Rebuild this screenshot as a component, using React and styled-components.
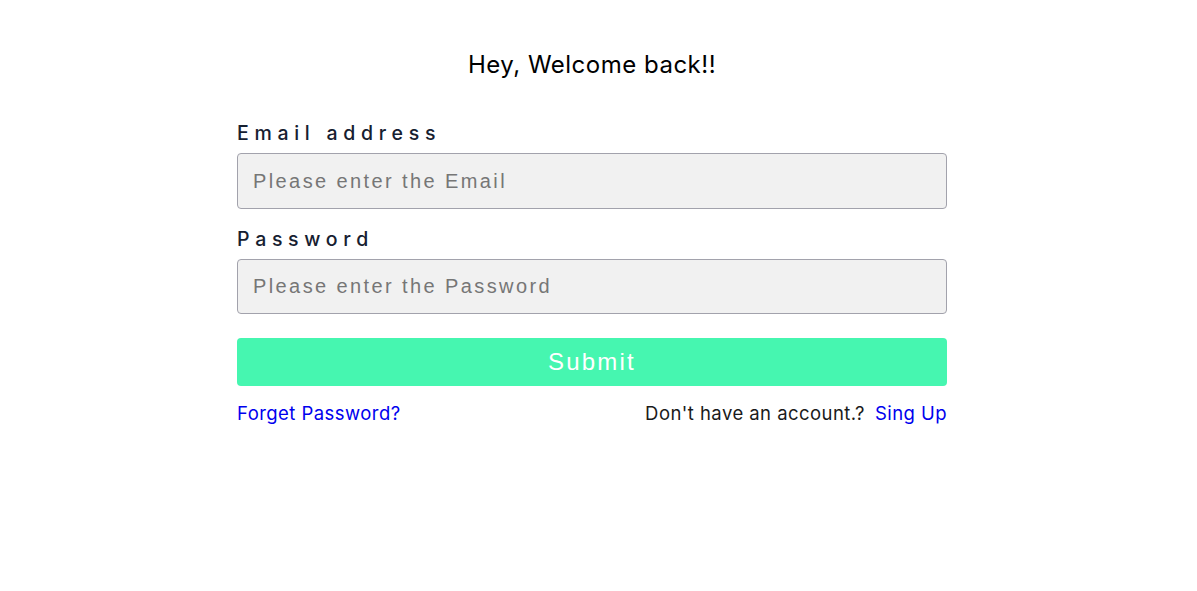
import React from 'react'
import styled, { createGlobalStyle } from 'styled-components'

const GlobalStyle = createGlobalStyle`
  body {
    margin: 0;
    background: #ffffff;
    font-family: "Inter", "Liberation Sans", sans-serif;
  }
`

const Page = styled.div`
  display: flex;
  flex-direction: column;
  align-items: center;
  padding: 50px 13px 0 0;
`

const Title = styled.h2`
  margin: 0 0 42px;
  font-size: 24px;
  font-weight: 400;
  letter-spacing: 0.5px;
  color: #000;
`

const Form = styled.form`
  width: 710px;
  display: flex;
  flex-direction: column;
`

const Label = styled.label`
  font-size: 19.5px;
  font-weight: 500;
  letter-spacing: 5.7px;
  color: #162030;
  margin-bottom: 8px;
`

const Input = styled.input`
  box-sizing: border-box;
  height: ${p => p.$h}px;
  width: 100%;
  padding: 0 15px;
  margin-bottom: ${p => p.$mb}px;
  border: 1px solid #a2a2ac;
  border-radius: 4px;
  background: #f1f1f1;
  font-family: "Liberation Sans", Arial, sans-serif;
  font-size: 20px;
  letter-spacing: 2.4px;
  color: #333;
  outline: none;

  &::placeholder {
    color: #767676;
  }
`

const SubmitButton = styled.button`
  height: 48px;
  width: 100%;
  border: none;
  border-radius: 4px;
  background: #46f6b0;
  color: #ffffff;
  font-family: "Liberation Sans", Arial, sans-serif;
  font-size: 24px;
  letter-spacing: 2.2px;
  cursor: pointer;
`

const Footer = styled.div`
  display: flex;
  justify-content: space-between;
  align-items: center;
  margin-top: 16px;
  font-size: 18.5px;
  letter-spacing: 0.45px;
`

const Link = styled.a`
  color: #0000ee;
  text-decoration: none;
  cursor: pointer;
`

const Muted = styled.span`
  color: #1a1a1a;
  margin-right: 10px;
`

export default function App() {
  return (
    <>
      <GlobalStyle />
      <Page>
        <Title>Hey, Welcome back!!</Title>
        <Form onSubmit={e => e.preventDefault()}>
          <Label htmlFor="email">Email address</Label>
          <Input id="email" type="email" placeholder="Please enter the Email" $h={56} $mb={18} />
          <Label htmlFor="password">Password</Label>
          <Input id="password" type="password" placeholder="Please enter the Password" $h={55} $mb={24} />
          <SubmitButton type="submit">Submit</SubmitButton>
          <Footer>
            <Link>Forget Password?</Link>
            <span>
              <Muted>Don't have an account.?</Muted>
              <Link>Sing Up</Link>
            </span>
          </Footer>
        </Form>
      </Page>
    </>
  )
}
